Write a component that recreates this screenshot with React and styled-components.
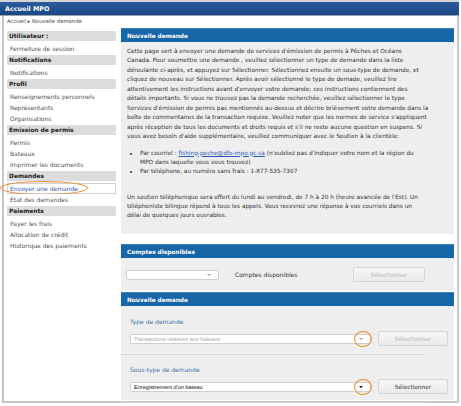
import React from 'react';
import styled, { createGlobalStyle } from 'styled-components';

const GlobalStyle = createGlobalStyle`
  html, body {
    margin: 0;
    padding: 0;
    background: #ffffff;
  }
  body {
    font-family: "DejaVu Sans", Verdana, sans-serif;
    color: #333333;
  }
`;

const sidebarGroups = [
  { title: 'Utilisateur :', items: ['Fermeture de session'] },
  { title: 'Notifications', items: ['Notifications'] },
  { title: 'Profil', items: ['Renseignements personnels', 'Représentants', 'Organisations'] },
  { title: 'Émission de permis', items: ['Permis', 'Bateaux', 'Imprimer les documents'] },
  { title: 'Demandes', items: ['Envoyer une demande', 'État des demandes'] },
  { title: 'Paiements', items: ['Payer les frais', 'Allocation de crédit', 'Historique des paiements'] },
];

const ACTIVE_ITEM = 'Envoyer une demande';

const introLines = [
  "Cette page sert à envoyer une demande de services d'émission de permis à Pêches et Océans",
  'Canada. Pour soumettre une demande , veuillez sélectionner un type de demande dans la liste',
  'déroulante ci-après, et appuyez sur Sélectionner. Sélectionnez ensuite un sous-type de demande, et',
  'cliquez de nouveau sur Sélectionner. Après avoir sélectionné le type de demade, veuillez lire',
  "attentivement les instructions avant d'envoyer votre demande; ces instructions contiennent des",
  'détails importants. Si vous ne trouvez pas la demande recherchée, veuillez sélectionner le type',
  "Services d'émission de permis pas mentionnés au-dessus et décrire brièvement votre demande dans la",
  "boîte de commentaires de la transaction requise. Veuillez noter que les normes de service s'appliquent",
  "après réception de tous les documents et droits requis et s'il ne reste aucune question en suspens. Si",
  "vous avez besoin d'aide supplémentaire, veuillez communiquer avec le Soutien à la clientèle:",
];

const supportLines = [
  "Un soutien téléphonique sera offert du lundi au vendredi, de 7 h à 20 h (heure avancée de l'Est). Un",
  'téléphoniste bilingue répond à tous les appels. Vous recevrez une réponse à vos courriels dans un',
  'délai de quelques jours ouvrables.',
];

const withBreaks = lines =>
  lines.map((line, i) => (
    <React.Fragment key={i}>
      {line}
      {i < lines.length - 1 && <br />}
    </React.Fragment>
  ));

export default function App() {
  return (
    <Page>
      <GlobalStyle />
      <TopBar>
        <TopTitle>Accueil MPO</TopTitle>
      </TopBar>
      <Frame>
        <Breadcrumb>Accueil ▸ Nouvelle demande</Breadcrumb>
        <Layout>
          <Sidebar>
            {sidebarGroups.map(group => (
              <div key={group.title}>
                <GroupTitle>{group.title}</GroupTitle>
                <ItemList>
                  {group.items.map(item => (
                    <Item key={item} active={item === ACTIVE_ITEM}>
                      {item}
                      {item === ACTIVE_ITEM && <Ellipse />}
                    </Item>
                  ))}
                </ItemList>
              </div>
            ))}
          </Sidebar>

          <Main>
            <Panel>
              <PanelHeader>Nouvelle demande</PanelHeader>
              <IntroBody>
                <Para>{withBreaks(introLines)}</Para>
                <Bullets>
                  <li>
                    Par courriel : <MailLink>fishing-peche@dfo-mpo.gc.ca</MailLink> (n'oubliez pas d'indiquer votre nom et la région du
                    <br />
                    MPO dans laquelle vous vous trouvez)
                  </li>
                  <li>Par téléphone, au numéro sans frais : 1-877-535-7307</li>
                </Bullets>
                <Para spaced>{withBreaks(supportLines)}</Para>
              </IntroBody>
            </Panel>

            <Panel gap={10}>
              <PanelHeader>Comptes disponibles</PanelHeader>
              <AccountsBody>
                <Select width={93}>
                  <Arrow muted />
                </Select>
                <AccountsLabel>Comptes disponibles</AccountsLabel>
                <Button disabled>Sélectionner</Button>
              </AccountsBody>
            </Panel>

            <Panel gap={1}>
              <PanelHeader>Nouvelle demande</PanelHeader>
              <RequestBody>
                <Field>
                  <FieldLabel>Type de demande</FieldLabel>
                  <FieldRow>
                    <Select width={241} muted>
                      Transactions relatives aux bateaux
                      <Arrow muted />
                      <Circle />
                    </Select>
                    <Button disabled wide>Sélectionner</Button>
                  </FieldRow>
                </Field>
                <Divider />
                <Field>
                  <FieldLabel>Sous-type de demande</FieldLabel>
                  <FieldRow>
                    <Select width={241}>
                      Enregistrement d'un bateau
                      <Arrow />
                      <Circle />
                    </Select>
                    <Button wide>Sélectionner</Button>
                  </FieldRow>
                </Field>
                <Divider />
              </RequestBody>
            </Panel>
          </Main>
        </Layout>
      </Frame>
    </Page>
  );
}

const Page = styled.div`
  width: 461px;
  height: 406px;
  overflow: hidden;
`;

const TopBar = styled.div`
  width: 459px;
  height: 13px;
  border-top: 2px solid #d4d4d4;
  border-bottom: 1px solid #9aa4b0;
  background: linear-gradient(#2a5b9c, #1c4783);
  display: flex;
  align-items: center;
`;

const TopTitle = styled.div`
  padding-left: 5px;
  color: #ffffff;
  font-weight: bold;
  font-size: 6.4px;
`;

const Frame = styled.div`
  margin-left: 2px;
  width: 453px;
  height: 385px;
  border: 2px solid #c6c6c6;
  border-top: none;
`;

const Breadcrumb = styled.div`
  height: 12px;
  line-height: 11px;
  padding-left: 3px;
  font-size: 5.3px;
  color: #444444;
`;

const Layout = styled.div`
  display: flex;
  align-items: flex-start;
  padding-left: 3px;
  gap: 5px;
`;

const Sidebar = styled.div`
  width: 109px;
  margin-top: 3px;
`;

const GroupTitle = styled.div`
  height: 10px;
  line-height: 10px;
  padding-left: 2px;
  background: #dcdcdc;
  color: #222222;
  font-weight: bold;
  font-size: 5.9px;
`;

const ItemList = styled.div`
  padding: 2px 0 1px;
`;

const Item = styled.div`
  position: relative;
  height: 11px;
  line-height: 11px;
  padding-left: 3px;
  font-size: 6px;
  color: ${props => (props.active ? '#2d5b9f' : '#505050')};
  background: #ffffff;
  box-shadow: ${props => (props.active ? 'inset 0 0 0 1px #d2d2d2' : 'none')};
`;

const Ellipse = styled.span`
  position: absolute;
  left: -7px;
  top: -2px;
  width: 88px;
  height: 14px;
  box-sizing: border-box;
  border: 1.5px solid #f0892d;
  border-radius: 50%;
`;

const Main = styled.div`
  width: 333px;
`;

const Panel = styled.section`
  margin-top: ${props => props.gap || 0}px;
  background: #eeeeee;
`;

const PanelHeader = styled.div`
  height: 14px;
  line-height: 14px;
  padding-left: 6px;
  background: #1767a8;
  border-top: 1px solid #3b82bd;
  box-sizing: border-box;
  color: #ffffff;
  font-weight: bold;
  font-size: 5.8px;
`;

const IntroBody = styled.div`
  height: 192px;
  box-sizing: border-box;
  padding: 5px 6px 0;
  font-size: 5.8px;
  line-height: 9.45px;
  color: #333333;
  white-space: nowrap;
`;

const Para = styled.p`
  margin: ${props => (props.spaced ? '17px' : '0')} 0 0;
`;

const Bullets = styled.ul`
  margin: 7px 0 0;
  padding-left: 13px;
  line-height: 9px;
`;

const MailLink = styled.a`
  color: #2b57b5;
  text-decoration: underline;
`;

const AccountsBody = styled.div`
  height: 33px;
  display: flex;
  align-items: center;
  padding-left: 5px;
  gap: 16px;
`;

const AccountsLabel = styled.div`
  width: 102px;
  font-size: 6px;
  color: #333333;
`;

const Select = styled.div`
  position: relative;
  width: ${props => props.width}px;
  height: 10px;
  box-sizing: border-box;
  padding-left: 3px;
  background: #ffffff;
  border: 1px solid #cfcfcf;
  border-radius: 2px;
  font-family: "Liberation Sans", Arial, sans-serif;
  font-size: 5.6px;
  line-height: 8px;
  color: ${props => (props.muted ? '#a8a8a8' : '#111111')};
`;

const Arrow = styled.span`
  position: absolute;
  right: 7px;
  top: 3px;
  width: 0;
  height: 0;
  border-left: 2px solid transparent;
  border-right: 2px solid transparent;
  border-top: 2px solid ${props => (props.muted ? '#a0a0a0' : '#111111')};
`;

const Circle = styled.span`
  position: absolute;
  right: -2px;
  top: -4px;
  width: 18px;
  height: 16px;
  box-sizing: border-box;
  border: 1.5px solid #f0892d;
  border-radius: 50%;
`;

const Button = styled.div`
  width: ${props => (props.wide ? 70 : 72)}px;
  height: 15px;
  box-sizing: border-box;
  display: flex;
  align-items: center;
  justify-content: center;
  border: 1px solid #d6d6d6;
  border-radius: 2px;
  background: linear-gradient(#f6f6f6, #eaeaea);
  font-size: 5.8px;
  color: ${props => (props.disabled ? '#b8b8b8' : '#333333')};
`;

const RequestBody = styled.div`
  padding-top: 12px;
  height: 82px;
`;

const Field = styled.div`
  padding: 0 0 8px 9px;
`;

const FieldLabel = styled.div`
  height: 8px;
  line-height: 8px;
  font-size: 6px;
  color: #3f6fa8;
  margin-bottom: 5px;
`;

const FieldRow = styled.div`
  display: flex;
  align-items: center;
  gap: 7px;
`;

const Divider = styled.div`
  width: 304px;
  height: 1px;
  background: #d6d6d6;
  margin-bottom: 11px;
`;
